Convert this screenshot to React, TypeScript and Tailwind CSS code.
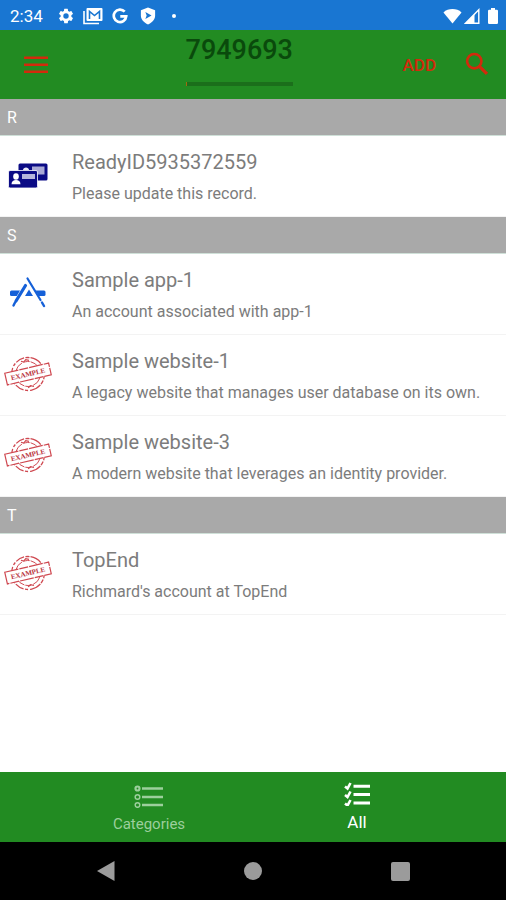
import type { ReactNode } from "react";

type IconKind = "cards" | "app" | "stamp";

interface Account {
  title: string;
  note: string;
  icon: IconKind;
}

interface Section {
  letter: string;
  items: Account[];
}

const sections: Section[] = [
  {
    letter: "R",
    items: [
      { title: "ReadyID5935372559", note: "Please update this record.", icon: "cards" }
    ]
  },
  {
    letter: "S",
    items: [
      { title: "Sample app-1", note: "An account associated with app-1", icon: "app" },
      {
        title: "Sample website-1",
        note: "A legacy website that manages user database on its own.",
        icon: "stamp"
      },
      {
        title: "Sample website-3",
        note: "A modern website that leverages an identity provider.",
        icon: "stamp"
      }
    ]
  },
  {
    letter: "T",
    items: [{ title: "TopEnd", note: "Richmard's account at TopEnd", icon: "stamp" }]
  }
];

function CardsIcon() {
  return (
    <svg viewBox="0 0 48 48" className="size-12" aria-hidden="true">
      <rect x="14.500" y="11.500" width="29" height="17" rx="1.500" fill="#0b0b85" />
      <path d="M19 18c0-3.500 6-3.500 6 0z" fill="#e8e8f8" />
      <rect x="28" y="14.500" width="12.500" height="8" fill="#a9a9d6" />
      <rect x="4.500" y="18.500" width="29" height="17.500" rx="1.500" fill="#0b0b85" stroke="#fff" strokeWidth="0.800" />
      <ellipse cx="12" cy="24.500" rx="2.800" ry="3.300" fill="#fff" />
      <path d="M7.500 32.300c0-3 2-4.200 4.500-4.200s4.500 1.200 4.500 4.200z" fill="#fff" />
      <rect x="18" y="22" width="13" height="5" fill="#b5b5dc" />
    </svg>
  );
}

function AppIcon() {
  return (
    <svg viewBox="0 0 48 48" className="size-12" aria-hidden="true">
      <g fill="#1560d8">
        <path d="M7.500 20.500H16l-3.200 5.500H7.500a1.500 1.500 0 0 1-1.500-1.500V22a1.500 1.500 0 0 1 1.500-1.500z" />
        <path d="M25 19.500l4 6.500h-8z" />
        <path d="M31.500 20.500h8.500a1.500 1.500 0 0 1 1.500 1.500v2.500a1.500 1.500 0 0 1-1.500 1.500h-5.300z" />
      </g>
      <g fill="none" stroke="#1560d8" strokeLinecap="round">
        <path d="M21.500 15.500L12 31" strokeWidth="3.200" />
        <path d="M11 32.500L9.500 35.500" strokeWidth="2.400" />
        <path d="M23.500 8.500L36.500 30" strokeWidth="2.200" />
        <path d="M38 32.500L40 36" strokeWidth="2.400" />
      </g>
    </svg>
  );
}

function StampIcon() {
  return (
    <svg viewBox="0 0 48 48" className="size-12" aria-hidden="true">
      <g transform="rotate(-13 24 23)">
        <g fill="none" stroke="#cf4850">
          <circle cx="24" cy="23" r="16.500" strokeWidth="1.300" strokeDasharray="9 1.500 4 1 12 2 3 1.500" />
          <circle cx="24" cy="23" r="12.500" strokeWidth="0.900" strokeDasharray="6 1 10 2" />
          <path d="M20 9l2.500 1.500L25 8.500l3 1.500M21 36.500l3-1.500 3 1.500" strokeWidth="1.200" />
        </g>
        <rect x="1.500" y="17" width="45" height="12" fill="#fff" stroke="#cf4850" strokeWidth="1.200" strokeDasharray="14 1 9 1" />
        <text
          x="24"
          y="25.500"
          textAnchor="middle"
          fontFamily="Liberation Serif, serif"
          fontWeight="700"
          fontSize="7"
          fill="#b9323c"
        >
          EXAMPLE
        </text>
      </g>
    </svg>
  );
}

const icons: Record<IconKind, () => ReactNode> = {
  cards: CardsIcon,
  app: AppIcon,
  stamp: StampIcon
};

function StatusBar() {
  return (
    <div className="flex h-[30px] items-center justify-between bg-[#1976d2] pt-px pr-2 pl-2.5 text-white">
      <div className="flex items-center gap-2.5">
        <span className="mr-1 text-[17px] leading-5">2:34</span>
        <svg viewBox="0 0 24 24" className="size-[18px]" fill="currentColor" aria-hidden="true">
          <path d="M19.140 12.940c.04-.3.060-.61.060-.94s-.02-.64-.07-.94l2.030-1.580a.49.49 0 0 0 .12-.61l-1.920-3.320a.49.49 0 0 0-.59-.22l-2.390.96a7 7 0 0 0-1.620-.94l-.36-2.540A.48.48 0 0 0 13.920 2.400h-3.840a.48.48 0 0 0-.48.41l-.36 2.540c-.59.24-1.130.57-1.620.94l-2.390-.96a.49.49 0 0 0-.59.22L2.740 8.870a.48.48 0 0 0 .12.61l2.030 1.580c-.05.3-.09.63-.09.94s.02.64.07.94l-2.030 1.580a.49.49 0 0 0-.12.61l1.920 3.320c.12.22.37.29.59.22l2.390-.96c.5.38 1.030.7 1.620.94l.36 2.540c.05.24.24.41.48.41h3.840c.24 0 .44-.17.47-.41l.36-2.540c.59-.24 1.130-.56 1.620-.94l2.390.96c.22.08.47 0 .59-.22l1.920-3.320a.48.48 0 0 0-.12-.61zM12 15.600a3.600 3.600 0 1 1 0-7.200 3.600 3.600 0 0 1 0 7.200z" />
        </svg>
        <svg viewBox="0 0 20 18" className="-ml-0.5 h-[18px] w-5" aria-hidden="true">
          <path d="M1 4v12.500h15" fill="none" stroke="#fff" strokeWidth="1.600" />
          <rect x="3.500" y="1" width="16" height="13" rx="1" fill="#fff" />
          <path d="M6.500 12V4.500l5 4 5-4V12" fill="none" stroke="#1976d2" strokeWidth="1.600" />
        </svg>
        <svg viewBox="0 0 18 18" className="-ml-px size-4" fill="none" stroke="currentColor" strokeWidth="3" aria-hidden="true">
          <path d="M14.300 4.200A7 7 0 1 0 16 9.400H9.300" />
        </svg>
        <svg viewBox="0 0 18 20" className="ml-0.5 h-[18px] w-4" aria-hidden="true">
          <path d="M9 .5l8 3v6c0 4.500-3.200 8-8 10-4.800-2-8-5.500-8-10v-6z" fill="#fff" />
          <path d="M6 5.500l7 4-7 4 1.500-4z" fill="#1976d2" />
        </svg>
        <span className="ml-1.5 size-1 rounded-full bg-white" />
      </div>
      <div className="flex items-center gap-0.5">
        <svg viewBox="0 0 20 16" className="h-4 w-[19px]" fill="currentColor" aria-hidden="true">
          <path d="M10 15.800L.5 4.200C5.500-.4 14.500-.4 19.500 4.200z" />
        </svg>
        <svg viewBox="0 0 16 16" className="size-4" aria-hidden="true">
          <path d="M14.800 1.800v13.400H1.500z" fill="none" stroke="#fff" strokeWidth="1.400" />
          <path d="M1 15.700L10.500 6v9.700z" fill="#fff" />
        </svg>
        <svg viewBox="0 0 10 16" className="ml-1.5 h-4 w-2.5" fill="currentColor" aria-hidden="true">
          <path d="M3 0h4v1.800h1.800A1.200 1.200 0 0 1 10 3v11.800A1.200 1.200 0 0 1 8.800 16H1.200A1.200 1.200 0 0 1 0 14.800V3a1.200 1.200 0 0 1 1.200-1.200H3z" />
        </svg>
      </div>
    </div>
  );
}

function Toolbar() {
  return (
    <header className="flex h-[69px] items-center bg-[#228b22] pr-4">
      <button type="button" aria-label="Menu" className="w-[76px] py-3 pl-6">
        <svg viewBox="0 0 24 18" className="h-[18px] w-6" fill="#d32a0c" aria-hidden="true">
          <path d="M0 .5h24v2.500H0zM0 7.500h24V10H0zM0 14.500h24V17H0z" />
        </svg>
      </button>
      <div className="flex h-full flex-1 justify-center">
        <div className="pt-1">
          <h1 className="text-[27px] leading-8 font-medium text-[#0a4a0c]">7949693</h1>
          <div
            role="progressbar"
            aria-label="Time remaining"
            aria-valuenow={0}
            className="mt-4 h-1 border-l border-[#a06a12] bg-[#1b6f1b]"
          />
        </div>
      </div>
      <div className="flex items-center gap-7 text-[#d32a0c]">
        <button type="button" className="text-[17px] leading-6 font-medium">ADD</button>
        <button type="button" aria-label="Search">
          <svg viewBox="0 0 24 24" className="size-[26px]" fill="none" stroke="currentColor" strokeWidth="2.400" aria-hidden="true">
            <circle cx="9.500" cy="8.500" r="6.600" />
            <path d="M14.200 13.200l7 7" strokeWidth="3" />
          </svg>
        </button>
      </div>
    </header>
  );
}

function AccountRow({ account }: { account: Account }) {
  const Icon = icons[account.icon];

  return (
    <li className="border-b border-[#f3f3f3]">
      <a href="#" className="flex items-center gap-5 pr-4 pl-1">
        <Icon />
        <div className="min-w-0 pt-3.5 pb-2.5 text-[#7c7c7c]">
          <p className="mb-2 text-[20px] leading-6">{account.title}</p>
          <p className="text-base leading-6">{account.note}</p>
        </div>
      </a>
    </li>
  );
}

function BottomNav() {
  return (
    <nav className="flex h-[70px] justify-center bg-[#228b22]">
      <button type="button" className="flex w-52 flex-col items-center gap-1 pt-3 text-[#9ccf9c]">
        <svg viewBox="0 0 30 24" className="h-6 w-[30px]" fill="none" stroke="currentColor" aria-hidden="true">
          <circle cx="3.500" cy="4.500" r="2" strokeWidth="2.200" />
          <circle cx="3.500" cy="13" r="2.300" strokeWidth="1.500" />
          <circle cx="3.500" cy="21" r="2.300" strokeWidth="1.500" />
          <path d="M8 4.500h21M8 13h21M8 21h21" strokeWidth="2.600" />
        </svg>
        <span className="text-[15px] leading-6">Categories</span>
      </button>
      <button type="button" className="flex w-52 flex-col items-center gap-1 pt-2.5 text-white">
        <svg viewBox="0 0 26 24" className="h-6 w-[26px]" fill="none" stroke="currentColor" aria-hidden="true">
          <path d="M1 4.500l2.500 2L6.500 1M1 13l2.500 2 3-5.500M1 21.500l2.500 2 3-5.500" strokeWidth="2.600" />
          <path d="M9.500 4.200H26M9.500 12.600H26M9.500 21H26" strokeWidth="3" />
        </svg>
        <span className="text-[17px] leading-6">All</span>
      </button>
    </nav>
  );
}

function SystemNav() {
  return (
    <div className="flex h-[58px] justify-center bg-black text-[#9b9b9b]">
      <button type="button" aria-label="Back" className="flex w-[147px] items-center justify-center">
        <svg viewBox="0 0 20 22" className="h-[22px] w-5" fill="currentColor" aria-hidden="true">
          <path d="M1 11L18.500 1v20z" />
        </svg>
      </button>
      <button type="button" aria-label="Home" className="flex w-[147px] items-center justify-center">
        <span className="size-[18px] rounded-full bg-[#9b9b9b]" />
      </button>
      <button type="button" aria-label="Recent apps" className="flex w-[147px] items-center justify-center">
        <span className="size-[19px] rounded-xs bg-[#9b9b9b]" />
      </button>
    </div>
  );
}

export default function App() {
  return (
    <div className="flex min-h-screen flex-col bg-white font-[Roboto,sans-serif]">
      <StatusBar />
      <Toolbar />
      <main className="flex-1">
        {sections.map((section) => (
          <section key={section.letter}>
            <h2 className="border-b border-[#cfe0d8] bg-[#a9a9a9] px-[7px] pt-[7px] pb-[5px] text-base leading-6 text-white">
              {section.letter}
            </h2>
            <ul>
              {section.items.map((account) => (
                <AccountRow key={account.title} account={account} />
              ))}
            </ul>
          </section>
        ))}
      </main>
      <BottomNav />
      <SystemNav />
    </div>
  );
}
